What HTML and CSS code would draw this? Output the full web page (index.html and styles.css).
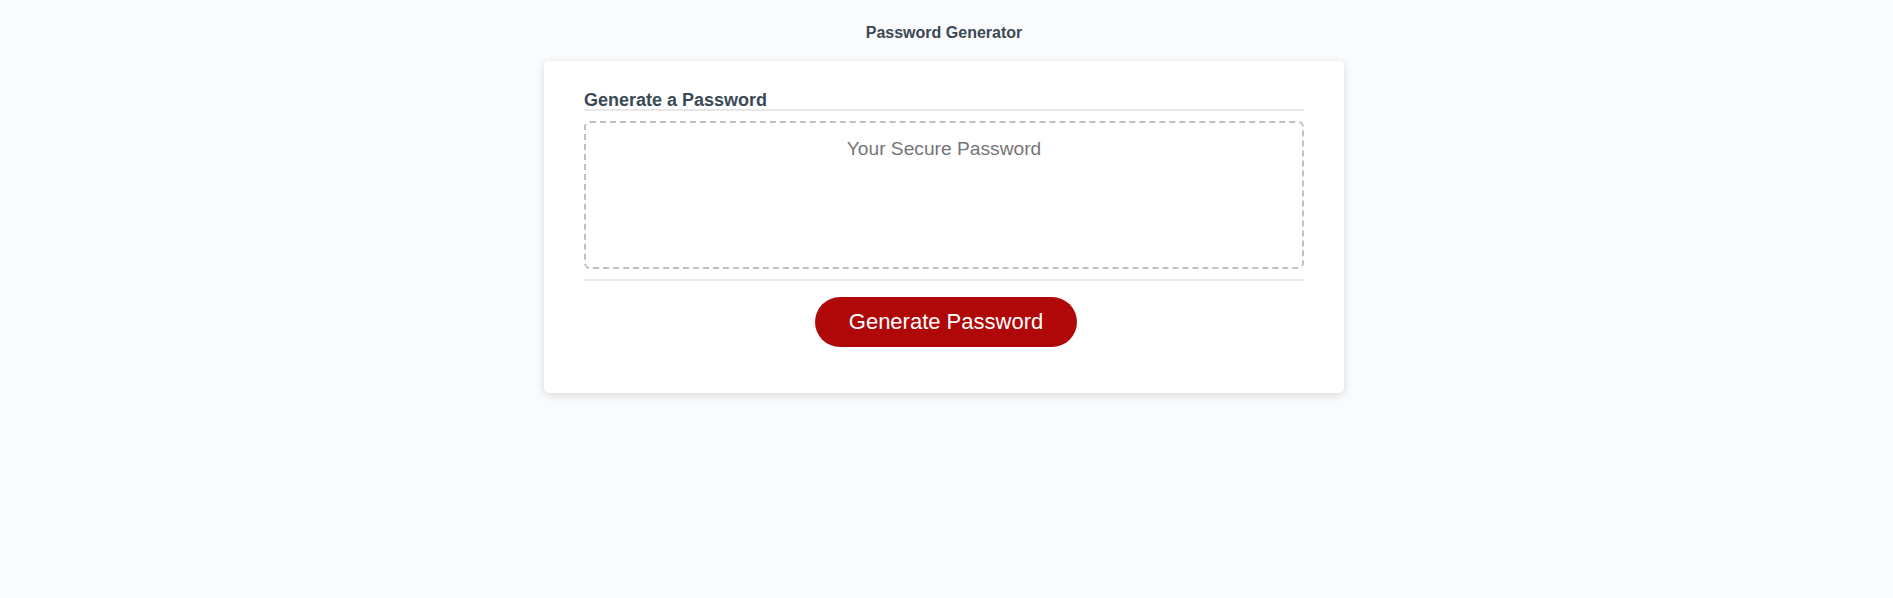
FILE: index.html
```html
<!DOCTYPE html>
<html lang="en">
<head>
<meta charset="UTF-8">
<title>Password Generator</title>
<link rel="stylesheet" href="styles.css">
</head>
<body>
<div class="wrapper">
  <header><h1>Password Generator</h1></header>
  <div class="card">
    <div class="card-header"><h2>Generate a Password</h2></div>
    <div class="card-body">
      <textarea readonly id="password" placeholder="Your Secure Password" aria-label="Generated Password"></textarea>
    </div>
    <div class="card-footer"><button class="btn">Generate Password</button></div>
  </div>
</div>
</body>
</html>
```
FILE: styles.css
```css
*,
*::before,
*::after {
  box-sizing: border-box;
}

body {
  margin: 0;
  padding-right: 5px;
  min-height: 100vh;
  background: #f9fbfd;
  color: hsl(206, 17%, 28%);
  font-family: "Liberation Sans", Arial, sans-serif;
  font-size: 18px;
}

.wrapper {
  width: 800px;
  margin: 0 auto;
  padding-top: 24px;
}

h1,
h2 {
  margin: 0;
}

header {
  text-align: center;
  padding-bottom: 19px;
}

h1 {
  font-size: 16px;
  line-height: 18px;
}

h2 {
  font-size: 18px;
  line-height: 18px;
}

.card {
  height: 332px;
  padding: 30px 40px;
  background: #fff;
  border-radius: 5px;
  box-shadow: rgba(0, 0, 0, 0.15) 0 2px 8px 0;
}

.card-header {
  border-bottom: 2px solid #e7e7e7;
}

.card-body {
  padding: 10px 0;
  border-bottom: 2px solid #e7e7e7;
}

textarea {
  display: block;
  width: 100%;
  height: 148px;
  padding: 15px;
  border: 2px dashed #c0c0c0;
  border-radius: 6px;
  resize: none;
  overflow: hidden;
  text-align: center;
  font: 19.2px "Liberation Sans", Arial, sans-serif;
}

textarea::placeholder {
  color: #757575;
}

.card-footer {
  display: flex;
  justify-content: center;
  padding: 16px 0 0 4px;
}

.btn {
  width: 262px;
  height: 50px;
  border: 0;
  border-radius: 25px;
  background: #b00808;
  color: #fff;
  font: 22px "Liberation Sans", Arial, sans-serif;
}
```
